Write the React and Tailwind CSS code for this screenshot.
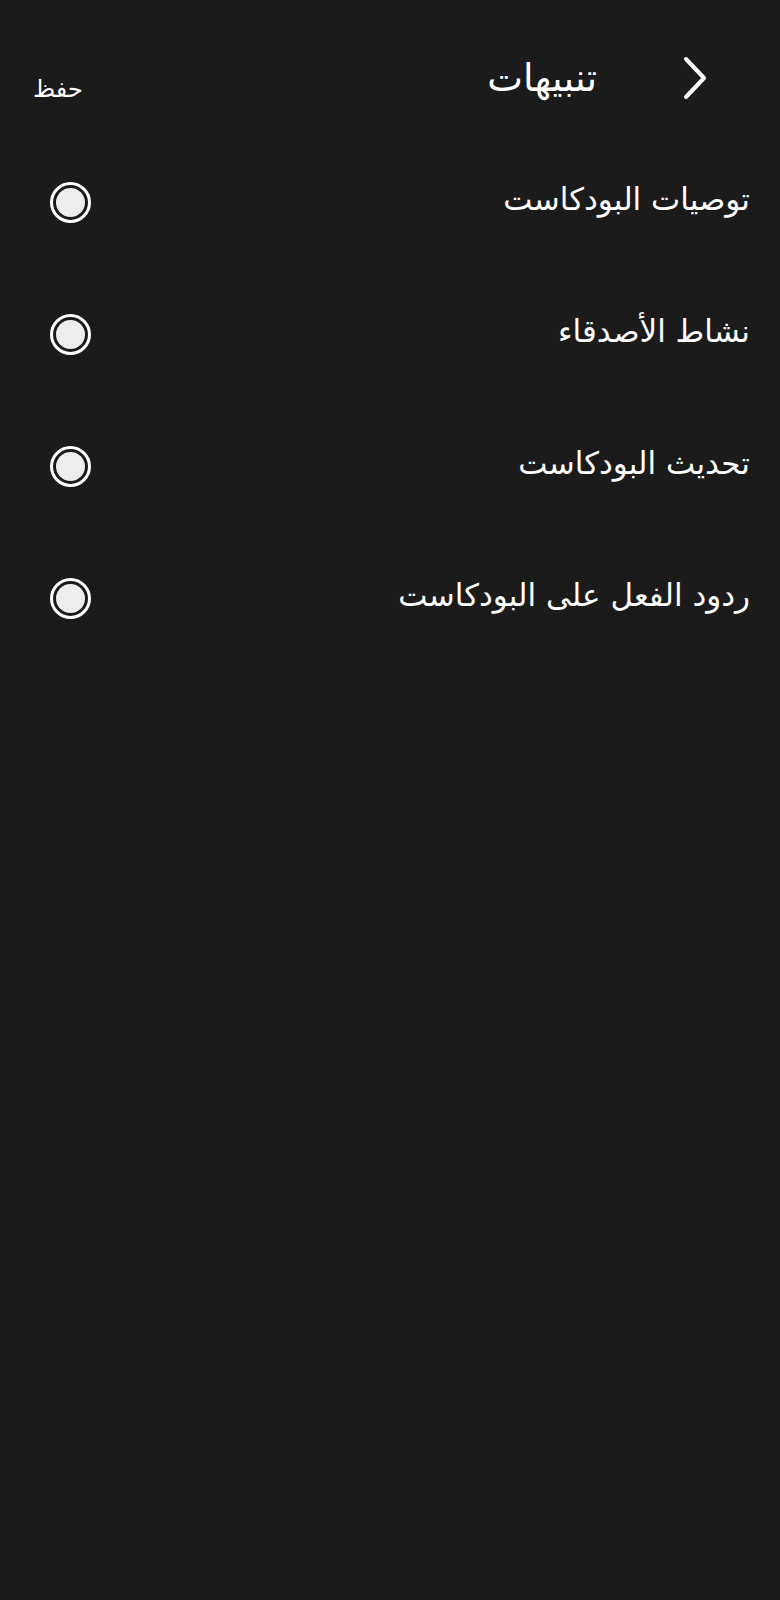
import React from 'react';

const ITEMS = [
  'توصيات البودكاست',
  'نشاط الأصدقاء',
  'تحديث البودكاست',
  'ردود الفعل على البودكاست',
];

const Radio = () => (
  <div className="w-[41px] h-[41px] mt-[6px] rounded-full border-[3px] border-white p-[3px] bg-[#1a1a1a]">
    <div className="w-full h-full rounded-full bg-[#ededed]" />
  </div>
);

export default function App() {
  return (
    <div
      dir="rtl"
      className="w-[780px] min-h-[1600px] bg-[#1b1b1b] text-white"
      style={{ fontFamily: '"DejaVu Sans", "Noto Sans", sans-serif' }}
    >
      {/* Header */}
      <div className="flex items-center h-[80px] pt-[38px] box-content pr-[73px] pl-[33px]">
        <button className="w-[25px] h-[44px] flex items-center justify-center">
          <svg width="25" height="44" viewBox="0 0 25 44" fill="none">
            <path d="M4 3 L22 22 L4 41" stroke="white" strokeWidth="4" strokeLinecap="round" strokeLinejoin="round" />
          </svg>
        </button>
        <h1 className="mr-[85px] text-[38px] leading-none">تنبيهات</h1>
        <button className="mr-auto text-[24px] leading-none mt-[21px]">حفظ</button>
      </div>

      {/* Options */}
      <div className="mt-[15px]">
        {ITEMS.map((label) => (
          <div key={label} className="flex items-center justify-between h-[132px] pr-[30px] pl-[50px]">
            <span className="text-[31px] leading-none">{label}</span>
            <Radio />
          </div>
        ))}
      </div>
    </div>
  );
}
